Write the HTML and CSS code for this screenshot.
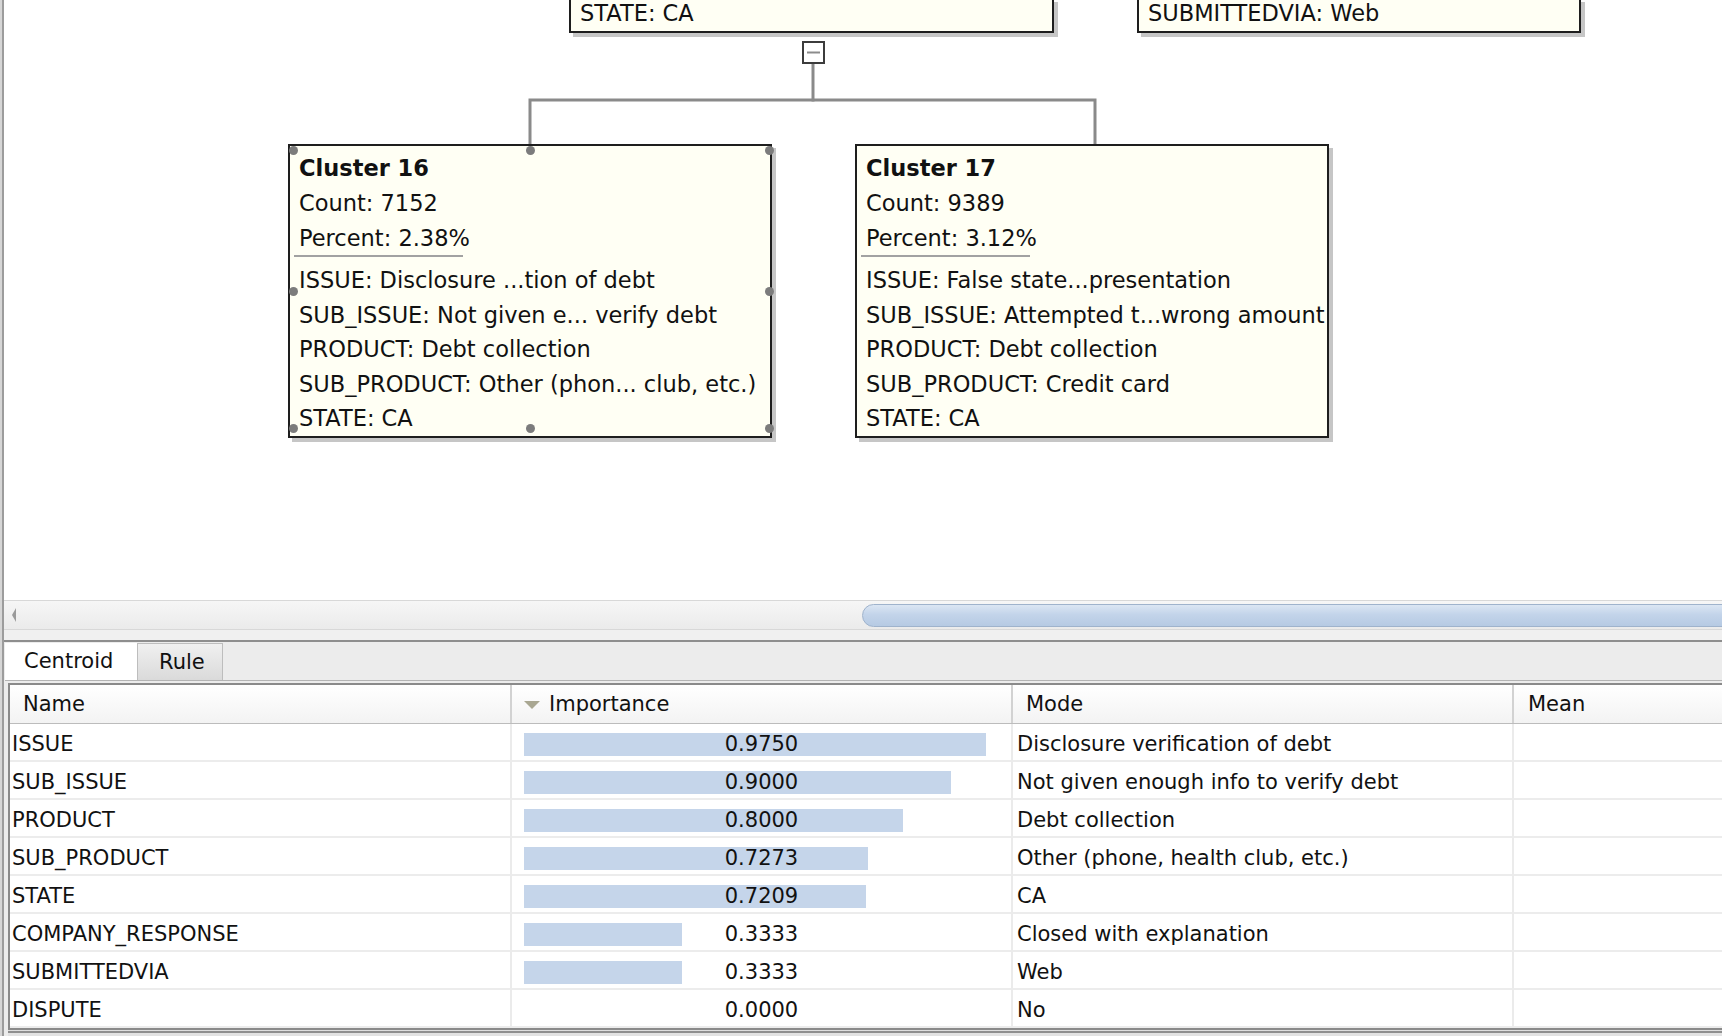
FILE: index.html
```html
<!DOCTYPE html>
<html>
<head>
<meta charset="utf-8">
<link rel="stylesheet" href="styles.css">
</head>
<body>
<div class="app">
<div class="frame">
  <div class="diagram">
    <svg class="links" width="1718" height="600" viewBox="0 0 1718 600">
      <line x1="809" y1="64" x2="809" y2="101.5" stroke="#8a8a8a" stroke-width="3"/>
      <polyline points="526,144 526,100 1091,100 1091,144" fill="none" stroke="#8a8a8a" stroke-width="3"/>
      <rect x="799" y="42" width="21" height="21" fill="#ffffff" stroke="#3c3c3c" stroke-width="2"/>
      <line x1="803" y1="52.5" x2="816" y2="52.5" stroke="#8c8c8c" stroke-width="2"/>
    </svg>

    <div class="node top node-a"><div class="ln">STATE: CA</div></div>
    <div class="node top node-b"><div class="ln">SUBMITTEDVIA: Web</div></div>

    <div class="node cluster c16">
      <div class="ln title">Cluster 16</div>
      <div class="ln">Count: 7152</div>
      <div class="ln">Percent: 2.38%</div>
      <div class="sep"></div>
      <div class="ln">ISSUE: Disclosure ...tion of debt</div>
      <div class="ln">SUB_ISSUE: Not given e... verify debt</div>
      <div class="ln">PRODUCT: Debt collection</div>
      <div class="ln">SUB_PRODUCT: Other (phon... club, etc.)</div>
      <div class="ln">STATE: CA</div>
      <span class="h h1"></span><span class="h h2"></span><span class="h h3"></span>
      <span class="h h4"></span><span class="h h5"></span>
      <span class="h h6"></span><span class="h h7"></span><span class="h h8"></span>
    </div>

    <div class="node cluster c17">
      <div class="ln title">Cluster 17</div>
      <div class="ln">Count: 9389</div>
      <div class="ln">Percent: 3.12%</div>
      <div class="sep"></div>
      <div class="ln">ISSUE: False state...presentation</div>
      <div class="ln">SUB_ISSUE: Attempted t...wrong amount</div>
      <div class="ln">PRODUCT: Debt collection</div>
      <div class="ln">SUB_PRODUCT: Credit card</div>
      <div class="ln">STATE: CA</div>
    </div>
  </div>

  <div class="hscroll">
    <div class="arrow"></div>
    <div class="thumb"></div>
  </div>
  <div class="gap"></div>

  <div class="panel">
    <div class="tabs">
      <div class="tab active">Centroid</div>
      <div class="tab">Rule</div>
    </div>
    <div class="tabgap"></div>
    <div class="table">
      <div class="row head">
        <div class="cell c-name">Name</div>
        <div class="cell c-imp"><span class="sort"></span>Importance</div>
        <div class="cell c-mode">Mode</div>
        <div class="cell c-mean">Mean</div>
      </div>
      <div class="row">
        <div class="cell c-name">ISSUE</div>
        <div class="cell c-imp"><div class="bar" style="width:462px"></div><div class="val">0.9750</div></div>
        <div class="cell c-mode">Disclosure verification of debt</div>
        <div class="cell c-mean"></div>
      </div>
      <div class="row">
        <div class="cell c-name">SUB_ISSUE</div>
        <div class="cell c-imp"><div class="bar" style="width:427px"></div><div class="val">0.9000</div></div>
        <div class="cell c-mode">Not given enough info to verify debt</div>
        <div class="cell c-mean"></div>
      </div>
      <div class="row">
        <div class="cell c-name">PRODUCT</div>
        <div class="cell c-imp"><div class="bar" style="width:379px"></div><div class="val">0.8000</div></div>
        <div class="cell c-mode">Debt collection</div>
        <div class="cell c-mean"></div>
      </div>
      <div class="row">
        <div class="cell c-name">SUB_PRODUCT</div>
        <div class="cell c-imp"><div class="bar" style="width:344px"></div><div class="val">0.7273</div></div>
        <div class="cell c-mode">Other (phone, health club, etc.)</div>
        <div class="cell c-mean"></div>
      </div>
      <div class="row">
        <div class="cell c-name">STATE</div>
        <div class="cell c-imp"><div class="bar" style="width:342px"></div><div class="val">0.7209</div></div>
        <div class="cell c-mode">CA</div>
        <div class="cell c-mean"></div>
      </div>
      <div class="row">
        <div class="cell c-name">COMPANY_RESPONSE</div>
        <div class="cell c-imp"><div class="bar" style="width:158px"></div><div class="val">0.3333</div></div>
        <div class="cell c-mode">Closed with explanation</div>
        <div class="cell c-mean"></div>
      </div>
      <div class="row">
        <div class="cell c-name">SUBMITTEDVIA</div>
        <div class="cell c-imp"><div class="bar" style="width:158px"></div><div class="val">0.3333</div></div>
        <div class="cell c-mode">Web</div>
        <div class="cell c-mean"></div>
      </div>
      <div class="row">
        <div class="cell c-name">DISPUTE</div>
        <div class="cell c-imp"><div class="bar" style="width:0px"></div><div class="val">0.0000</div></div>
        <div class="cell c-mode">No</div>
        <div class="cell c-mean"></div>
      </div>
    </div>
    <div class="panel-foot"></div>
  </div>
</div>
</div>
</body>
</html>
```

FILE: styles.css
```css
* { box-sizing: border-box; }

html, body {
  margin: 0;
  padding: 0;
  width: 1722px;
  height: 1036px;
  overflow: hidden;
  background: #ffffff;
  font-family: "DejaVu Sans", "Noto Sans", sans-serif;
  color: #111111;
}

.app {
  height: 1036px;
  border-left: 2px solid #d6d6d6;
}

.frame {
  height: 100%;
  border-left: 2px solid #9c9c9c;
  display: flex;
  flex-direction: column;
}

/* ---------- diagram canvas ---------- */
.diagram {
  position: relative;
  height: 600px;
  flex: none;
  background: #ffffff;
  overflow: hidden;
}

.links {
  position: absolute;
  left: 0;
  top: 0;
}

.node {
  position: absolute;
  background: #fffff4;
  border: 2px solid #1e1e1e;
  box-shadow: 4px 4px 0 #c6c6c6;
  padding: 4px 0 0 9px;
  font-size: 22.5px;
  white-space: nowrap;
}

.ln {
  height: 34.5px;
  line-height: 34.5px;
}

.title {
  font-weight: bold;
  height: 36px;
  line-height: 36px;
}

.top {
  top: -2px;
  padding: 3px 0 7px 9px;
}

.top .ln {
  height: 21px;
  line-height: 21px;
}

.node-a {
  left: 565px;
  width: 485px;
}

.node-b {
  left: 1133px;
  width: 444px;
}

.cluster {
  top: 144px;
  height: 294px;
}

.c16 { left: 284px; width: 484px; }
.c17 { left: 851px; width: 474px; }

.sep {
  width: 169px;
  height: 2px;
  margin: 0 0 6px -5px;
  background: #a2a2a2;
}

.h {
  position: absolute;
  width: 9px;
  height: 9px;
  border-radius: 50%;
  background: #7c7c7c;
}
.h1 { left: -1px;  top: 0px; }
.h2 { left: 236px; top: 0px; }
.h3 { left: 475px; top: 0px; }
.h4 { left: -1px;  top: 141px; }
.h5 { left: 475px; top: 141px; }
.h6 { left: -1px;  top: 278px; }
.h7 { left: 236px; top: 278px; }
.h8 { left: 475px; top: 278px; }

/* ---------- horizontal scrollbar ---------- */
.hscroll {
  flex: none;
  height: 30px;
  border-top: 1px solid #d8d8d8;
  border-bottom: 1px solid #d8d8d8;
  background: linear-gradient(#f6f6f6, #ebebeb);
  display: flex;
  align-items: center;
  padding-left: 8px;
}

.arrow {
  width: 0;
  height: 0;
  border-top: 7px solid transparent;
  border-bottom: 7px solid transparent;
  border-right: 4px solid #9a9a9a;
}

.thumb {
  margin-left: 846px;
  flex: 1;
  height: 23px;
  margin-right: -20px;
  border: 1px solid #9fb3cc;
  border-radius: 12px 0 0 12px;
  background: linear-gradient(#dbe6f3, #c3d4ea 45%, #b6cae3);
}

.gap {
  flex: none;
  background: #f0f0f0;
  border-bottom: 2px solid #8e8e8e;
  height: 12px;
}

/* ---------- bottom panel ---------- */
.panel {
  flex: 1;
  background: #ececec;
  display: flex;
  flex-direction: column;
  padding-left: 4px;
}

.tabs {
  flex: none;
  height: 39px;
  padding-top: 1px;
  border-bottom: 1px solid #b4b4b4;
  display: flex;
  margin-left: -3px;
}

.tab {
  height: 37px;
  line-height: 36px;
  font-size: 21px;
  padding: 0 0 0 19px;
}

.tab.active {
  width: 132px;
  background: #ffffff;
}

.tab:not(.active) {
  width: 86px;
  padding: 0 0 0 21px;
  background: linear-gradient(#f0f0f0, #dadada);
  border: 1px solid #bdbdbd;
  border-bottom: none;
}

.tabgap {
  flex: none;
  height: 2px;
}

.table {
  flex: none;
  border-top: 2px solid #8a8a8a;
  border-left: 2px solid #8a8a8a;
  border-bottom: 2px solid #8a8a8a;
  background: #ffffff;
  font-size: 21px;
}

.row {
  display: grid;
  grid-template-columns: 502px 501px 501px 1fr;
  height: 38px;
  border-bottom: 2px solid #ececec;
}

.row.head {
  height: 39px;
  border-bottom: 1px solid #bcbcbc;
  background: linear-gradient(#ffffff, #f3f3f3);
}

.cell {
  padding-top: 2px;
  line-height: 36px;
  white-space: nowrap;
  border-right: 2px solid #ebebeb;
}

.head .cell {
  padding-top: 0;
  line-height: 38px;
  border-right: 2px solid #d2d2d2;
}

.c-name { padding-left: 2px; }
.head .c-name { padding-left: 13px; }

.c-mode { padding-left: 4px; }
.head .c-mode { padding-left: 13px; }

.head .c-mean { padding-left: 14px; border-right: none; }
.c-mean { border-right: none; }

.c-imp {
  display: grid;
  align-items: center;
}

.head .c-imp {
  display: flex;
  align-items: center;
  padding-left: 12px;
}

.sort {
  width: 0;
  height: 0;
  border-left: 8px solid transparent;
  border-right: 8px solid transparent;
  border-top: 8px solid #a9a792;
  margin: 2px 9px 0 0;
}

.bar {
  grid-area: 1 / 1;
  height: 23px;
  margin-left: 12px;
  background: #c5d5ea;
}

.val {
  grid-area: 1 / 1;
  text-align: center;
  line-height: 36px;
}

.panel-foot {
  flex: 1;
  border-top: 1px solid #dedede;
  background: linear-gradient(#8e8e8e 0, #8e8e8e 2px, #e2e2e2 2px);
}
```
